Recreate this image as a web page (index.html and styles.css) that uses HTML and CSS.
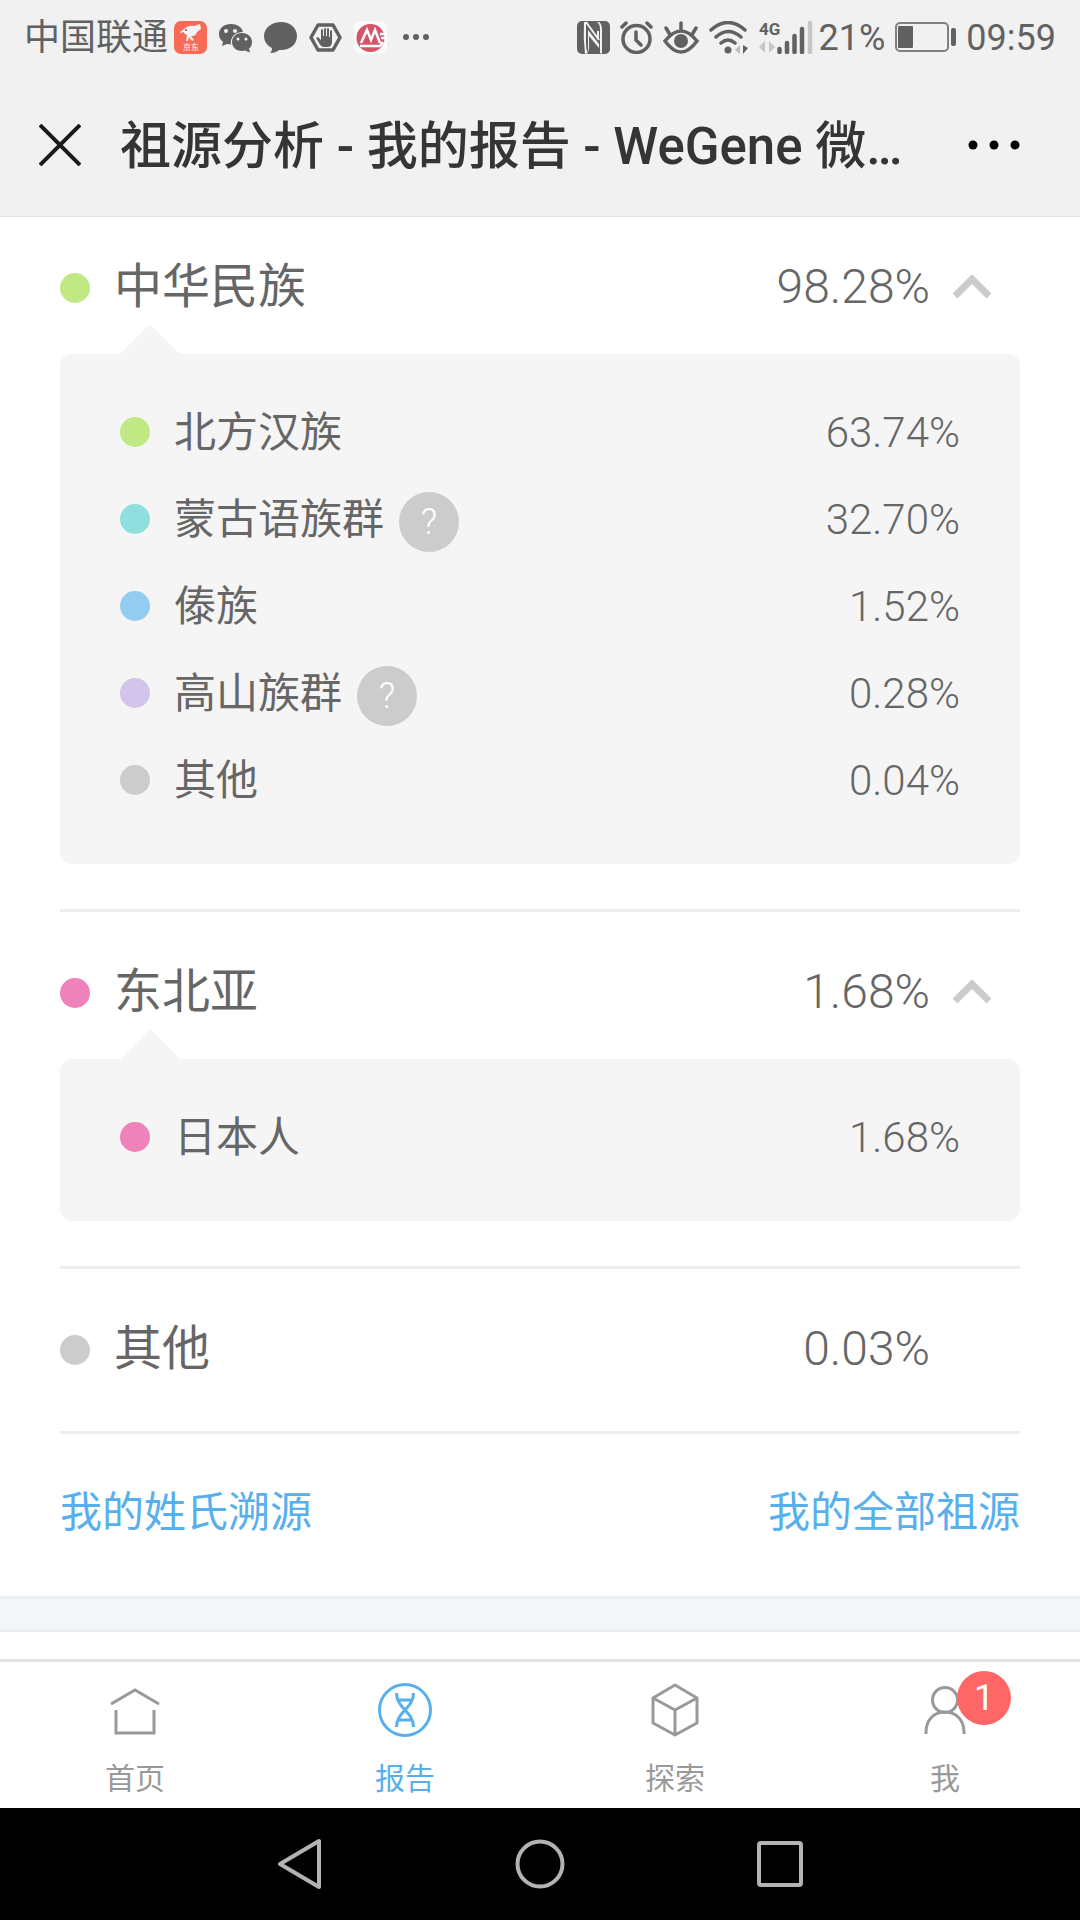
FILE: index.html
```html
<!DOCTYPE html>
<html lang="zh-CN">
<head>
    <meta charset="UTF-8">
    <meta name="viewport" content="width=device-width, initial-scale=1.0">
    <title>祖源分析 - 我的报告 - WeGene</title>
    <link rel="stylesheet" href="styles.css">
</head>
<body>
    <div class="status-bar">
        <div class="status-left">
            <span class="carrier">中国联通</span>
            <svg width="33" height="33" viewBox="0 0 33 33">
                <rect width="33" height="33" rx="7" fill="#f76b56"/>
                <path d="M6 11c1-1 2-1 4-3 3-3 7-4 10-3l6-2 1 5-4 3c-1 4-4 4-6 4l3 4-2 1-3-4-1 4h-2l1-6c-3-1-3-2-3-3-2 1-4 1-4 0z" fill="#f4f4f4"/>
                <circle cx="12" cy="9" r="1" fill="#666"/>
                <text x="9" y="29" font-size="8" fill="#fff">京东</text>
            </svg>
            <svg width="33" height="33" viewBox="0 0 33 33" fill="#616161">
                <path d="M12 3C5 3 0 7 0 13c0 4 2 6 4 8l-1 4 5-2 4 .5C11 16 16 11 24 11 23 6 18 3 12 3z"/>
                <path d="M23 12c-6 0-10 4-10 9s4 9 10 9l3-.5 5 2-1-4c2-1 3-4 3-6.500 0-5-4-9-10-9z"/>
                <g fill="#f1f1f1"><circle cx="7" cy="10" r="2"/><circle cx="16" cy="10" r="2"/><circle cx="19" cy="18" r="1.500"/><circle cx="27" cy="18" r="1.500"/></g>
            </svg>
            <svg width="33" height="33" viewBox="0 0 33 33">
                <path d="M17 1C8 1 0 7 0 15c0 6 4 10 8 12 0 3-1 4-2 5 4 0 7-1 9-3 10 1 18-5 18-14C33 7 26 1 17 1z" fill="#616161"/>
            </svg>
            <svg width="33" height="33" viewBox="0 0 33 33">
                <path d="M9 4h15l7 12.500L24 29H9L2 16.500z" fill="none" stroke="#616161" stroke-width="3.500" stroke-linejoin="round"/>
                <path d="M7 17l2-1 3 3V9q1-2 2 0v6h1V8q1-2 2 0v7h1V8q1-2 2 0v8h1v-6q1-2 2 0v11q0 5-5 5h-3q-3 0-5-4z" fill="#616161"/>
            </svg>
            <svg width="33" height="33" viewBox="0 0 33 33">
                <rect width="33" height="33" rx="7" fill="#fafafa"/>
                <circle cx="16.500" cy="17" r="14" fill="#d4546a"/>
                <path d="M7 22l6-13 4 10 4-10 5 13M6 25h20l3-4M26 13h5M27 17h5" fill="none" stroke="#fff" stroke-width="2.500"/>
            </svg>
            <svg class="more-apps" width="26" height="6" viewBox="0 0 26 6" fill="#616161">
                <circle cx="3" cy="3" r="3"/><circle cx="13" cy="3" r="3"/><circle cx="23" cy="3" r="3"/>
            </svg>
        </div>
        <div class="status-right">
            <svg width="33" height="33" viewBox="0 0 33 33">
                <rect width="33" height="33" rx="5" fill="#616161"/>
                <path d="M7 1q-1 16 1 32l3-1q-2-3-2-10V1zM11 9v17q0 3 1 5V15l10 12v-4zM22 1q3 2 3 8v24l-2-1V8q0-5-3-7zM20 10h2v9l-2-3z" fill="#f1f1f1"/>
                <path d="M9 1l13 18" stroke="#f1f1f1" stroke-width="2"/>
            </svg>
            <svg width="33" height="33" viewBox="0 0 33 33" fill="none" stroke="#616161" stroke-width="3.500" stroke-linecap="round">
                <circle cx="16.500" cy="18" r="13.500"/>
                <path d="M16 11v8l5 5M2 6l4-4M27 2l4 4"/>
            </svg>
            <svg width="36" height="33" viewBox="0 0 36 33" fill="none" stroke="#616161" stroke-width="3.500" stroke-linecap="round">
                <path d="M2 20q16-20 32 0-16 22-32 0zM18 2v6M3 7l3 5M33 7l-3 5"/>
                <circle cx="18" cy="20" r="7" fill="#616161" stroke="none"/>
            </svg>
            <svg width="40" height="33" viewBox="0 0 40 33" fill="none" stroke="#616161" stroke-width="3.500" stroke-linecap="round">
                <path d="M2 9q17-15 34 0M7 16q12-11 25 0M12 22q7-6 14 0"/>
                <circle cx="19" cy="29" r="3.500" fill="#616161" stroke="none"/>
                <path d="M31 24v9l-5-4z" fill="#bdbdbd" stroke="none"/>
                <path d="M34 24v9l5-6z" fill="#616161" stroke="none"/>
            </svg>
            <svg class="signal" width="54" height="34" viewBox="0 0 54 34">
                <text x="0" y="15" font-size="17" font-weight="700" fill="#616161">4G</text>
                <path d="M6 21v12l-6-6zM10 21v12l6-6z" fill="#c6c6c6"/>
                <path d="M20.500 29v3M28 23v9M35.500 16v16M43 9v23" stroke="#616161" stroke-width="4.500" stroke-linecap="round"/>
                <path d="M51 3v29" stroke="#c6c6c6" stroke-width="4.500" stroke-linecap="round"/>
            </svg>
            <span>21%</span>
            <svg width="61" height="30" viewBox="0 0 61 30">
                <rect x="1" y="1" width="52" height="28" rx="4" fill="none" stroke="#808080" stroke-width="2"/>
                <rect x="3" y="4" width="15" height="22" rx="1" fill="#616161"/>
                <rect x="56" y="6" width="5" height="18" rx="2" fill="#616161"/>
            </svg>
            <span>09:59</span>
        </div>
    </div>

    <header class="title-bar">
        <button class="icon-button" aria-label="关闭">
            <svg width="42" height="42" viewBox="0 0 42 42" stroke="#1a1a1a" stroke-width="4">
                <path d="M1 1l40 40M41 1L1 41"/>
            </svg>
        </button>
        <h1>祖源分析 - 我的报告 - WeGene 微…</h1>
        <button class="icon-button" aria-label="更多">
            <svg width="52" height="10" viewBox="0 0 52 10">
                <circle cx="5" cy="5" r="4.500"/><circle cx="26" cy="5" r="4.500"/><circle cx="47" cy="5" r="4.500"/>
            </svg>
        </button>
    </header>

    <main>
        <section class="group">
            <button class="group-head" aria-expanded="true">
                <span class="dot green"></span>
                <span class="name">中华民族</span>
                <span class="percent">98.28%</span>
                <svg class="chevron" width="38" height="24" viewBox="0 0 38 24"><path d="M2 21L19 4l17 17"/></svg>
            </button>
            <ul class="panel">
                <li><span class="dot green"></span><span class="name">北方汉族</span><span class="percent">63.74%</span></li>
                <li><span class="dot teal"></span><span class="name">蒙古语族群<button class="help">?</button></span><span class="percent">32.70%</span></li>
                <li><span class="dot blue"></span><span class="name">傣族</span><span class="percent">1.52%</span></li>
                <li><span class="dot purple"></span><span class="name">高山族群<button class="help">?</button></span><span class="percent">0.28%</span></li>
                <li><span class="dot gray"></span><span class="name">其他</span><span class="percent">0.04%</span></li>
            </ul>
        </section>

        <section class="group">
            <button class="group-head" aria-expanded="true">
                <span class="dot pink"></span>
                <span class="name">东北亚</span>
                <span class="percent">1.68%</span>
                <svg class="chevron" width="38" height="24" viewBox="0 0 38 24"><path d="M2 21L19 4l17 17"/></svg>
            </button>
            <ul class="panel">
                <li><span class="dot pink"></span><span class="name">日本人</span><span class="percent">1.68%</span></li>
            </ul>
        </section>

        <section class="group">
            <div class="group-head">
                <span class="dot gray"></span>
                <span class="name">其他</span>
                <span class="percent">0.03%</span>
                <span class="chevron-space"></span>
            </div>
        </section>

        <div class="links">
            <a href="#surname">我的姓氏溯源</a>
            <a href="#ancestry">我的全部祖源</a>
        </div>
        <div class="band"></div>
    </main>

    <nav class="tab-bar">
        <a href="#home">
            <svg width="54" height="56" viewBox="0 0 54 56">
                <path d="M3 22L27 8l24 14M8 28v23h38V28"/>
            </svg>
            首页
        </a>
        <a href="#report" class="active">
            <svg width="54" height="56" viewBox="0 0 54 56">
                <circle cx="27" cy="28" r="25.500"/>
                <path d="M18.500 11c0 16 17 18 17 34M35.500 11c0 16-17 18-17 34M20 18h14M20 38h14"/>
            </svg>
            报告
        </a>
        <a href="#explore">
            <svg width="54" height="56" viewBox="0 0 54 56">
                <path d="M27 3l22 13v25L27 53 5 41V16zM5 16l22 12 22-12M27 28v25" stroke-linejoin="round"/>
            </svg>
            探索
        </a>
        <a href="#me">
            <svg width="54" height="56" viewBox="0 0 54 56">
                <circle cx="27" cy="18" r="12.500"/>
                <path d="M8 52V50c0-12 8-20 19-20s19 8 19 20v2"/>
            </svg>
            我
            <span class="badge">1</span>
        </a>
    </nav>

    <div class="system-bar">
        <button aria-label="返回"><svg width="50" height="52" viewBox="0 0 50 52"><path d="M44 3v46L5 26z"/></svg></button>
        <button aria-label="主屏幕"><svg width="50" height="52" viewBox="0 0 50 52"><circle cx="25" cy="26" r="22.500"/></svg></button>
        <button aria-label="最近任务"><svg width="50" height="52" viewBox="0 0 50 52"><rect x="4" y="5" width="42" height="42" rx="2"/></svg></button>
    </div>

    <script>
        // 展开 / 收起分组
        document.querySelectorAll('button.group-head').forEach(head => {
            head.addEventListener('click', () => {
                const closed = head.parentElement.classList.toggle('closed');
                head.setAttribute('aria-expanded', !closed);
            });
        });
    </script>
</body>
</html>
```
FILE: styles.css
```css
* {
    box-sizing: border-box;
}
body {
    margin: 0;
    min-height: 100vh;
    display: flex;
    flex-direction: column;
    font-family: Roboto, "Noto Sans CJK SC", sans-serif;
    line-height: 1.5;
    background-color: #fff;
    color: #666;
}
button {
    padding: 0;
    border: none;
    background: none;
    font: inherit;
    color: inherit;
    cursor: pointer;
}
a {
    text-decoration: none;
}
svg {
    display: block;
    flex-shrink: 0;
}

/* 状态栏 */
.status-bar {
    display: flex;
    justify-content: space-between;
    align-items: center;
    height: 74px;
    padding: 0 24px;
    background-color: #f1f1f1;
    color: #616161;
    font-size: 36px;
}
.status-bar span {
    padding-top: 2px;
}
.status-left, .status-right {
    display: flex;
    align-items: center;
    gap: 12px;
}
.status-right {
    gap: 10px;
}
.carrier {
    margin-right: -6px;
}
.more-apps {
    margin-left: 4px;
}
.signal {
    margin-right: -4px;
}

/* 标题栏 */
.title-bar {
    display: flex;
    align-items: center;
    height: 143px;
    padding: 0 60px 0 39px;
    border-bottom: 1px solid #dedede;
    background-color: #f1f1f1;
}
.title-bar h1 {
    flex: 1;
    min-width: 0;
    margin: 0 54px 0 39px;
    padding-top: 5px;
    overflow: hidden;
    text-overflow: ellipsis;
    white-space: nowrap;
    font-size: 51px;
    font-weight: 500;
    color: #353535;
}

/* 祖源列表 */
main {
    flex: 1;
}
.group {
    margin: 0 60px;
    padding-bottom: 45px;
    border-bottom: 3px solid #ebeff2;
}
.group:first-child {
    margin-top: -10px;
}
.group-head {
    display: flex;
    align-items: center;
    width: 100%;
    height: 147px;
    padding: 13px 29px 0 0;
    font-size: 48px;
    text-align: left;
}
div.group-head {
    margin-bottom: -30px;
}
.name {
    display: flex;
    flex: 1;
    align-items: center;
    margin-left: 24px;
}
.percent {
    font-weight: 300;
}
.dot {
    width: 30px;
    height: 30px;
    border-radius: 50%;
}
.group-head .dot {
    margin-top: 2px;
}
.panel .dot {
    margin-bottom: 2px;
}
.green { background-color: #c0e884; }
.teal { background-color: #90dfdf; }
.blue { background-color: #92cdf1; }
.purple { background-color: #d1c5eb; }
.gray { background-color: #ccc; }
.pink { background-color: #ef82b8; }
.chevron {
    margin-left: 23px;
    fill: none;
    stroke: #ccc;
    stroke-width: 7;
}
.chevron-space {
    width: 61px;
}
.closed .chevron {
    transform: rotate(180deg);
}
.closed .panel {
    display: none;
}
.panel {
    position: relative;
    margin: 0;
    padding: 35px 60px 40px;
    border-radius: 12px;
    background-color: #f5f5f5;
    list-style: none;
    font-size: 42px;
}
.panel::before {
    content: "";
    position: absolute;
    left: 60px;
    bottom: 100%;
    border: 30px solid transparent;
    border-top: none;
    border-bottom-color: #f5f5f5;
}
.panel li {
    display: flex;
    align-items: center;
    height: 87px;
}
.help {
    width: 60px;
    height: 60px;
    margin: 4px 0 0 15px;
    border-radius: 50%;
    background-color: #ccc;
    color: #fff;
    font-size: 36px;
    font-weight: 300;
}

.links {
    display: flex;
    justify-content: space-between;
    padding: 47px 60px 0;
    height: 162px;
    font-size: 42px;
}
.links a {
    color: #58afed;
}
.band {
    height: 36px;
    border: solid #ebeff2;
    border-width: 3px 0;
    background-color: #f3f7fa;
}

/* 底部导航 */
.tab-bar {
    display: grid;
    grid-template-columns: repeat(4, 1fr);
    height: 149px;
    border-top: 3px solid #e1e4e6;
    font-size: 30px;
}
.tab-bar a {
    position: relative;
    display: flex;
    flex-direction: column;
    align-items: center;
    gap: 18px;
    padding-top: 20px;
    color: #999;
}
.tab-bar svg {
    fill: none;
    stroke: currentColor;
    stroke-width: 3;
}
.tab-bar a.active {
    color: #58afed;
}
.badge {
    position: absolute;
    top: 9px;
    left: 50%;
    width: 54px;
    height: 54px;
    margin-left: 12px;
    border-radius: 50%;
    background-color: #f66;
    color: #fff;
    font-size: 36px;
    line-height: 54px;
    text-align: center;
}

/* 系统按键 */
.system-bar {
    display: flex;
    justify-content: center;
    align-items: center;
    gap: 190px;
    height: 112px;
    background-color: #000;
}
.system-bar svg {
    fill: none;
    stroke: #b3b3b3;
    stroke-width: 4;
    stroke-linejoin: round;
}
```
